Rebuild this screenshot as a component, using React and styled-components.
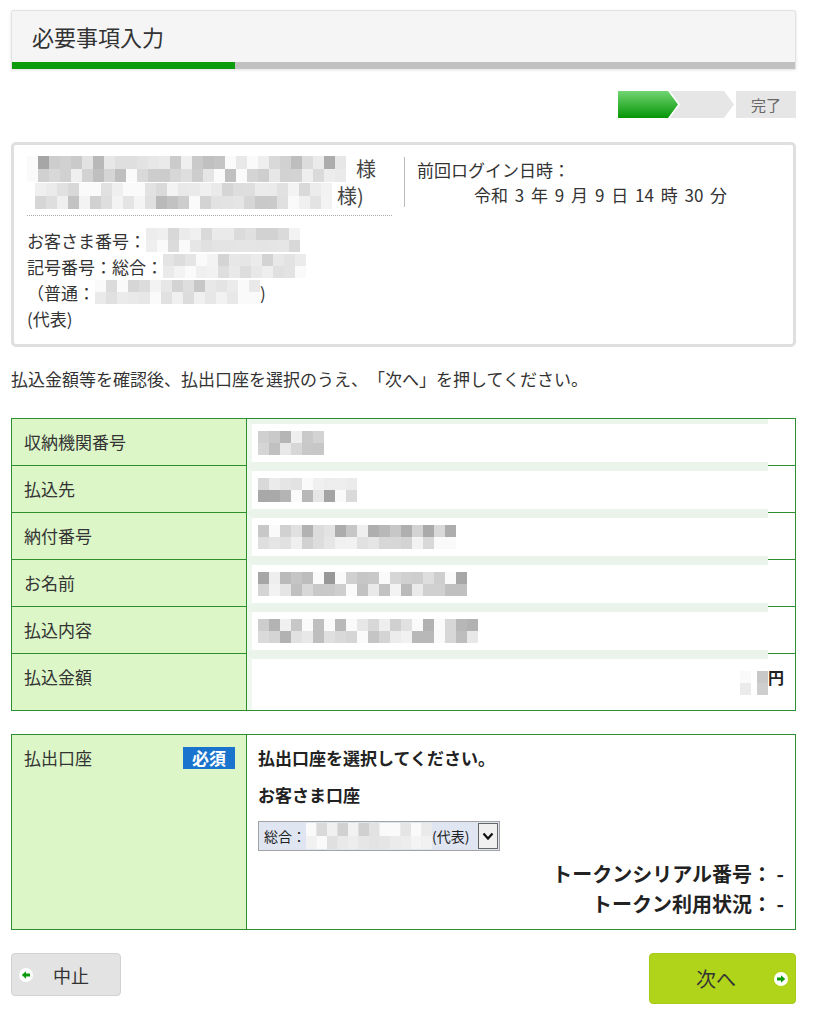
import React from 'react';
import styled, { createGlobalStyle } from 'styled-components';

const GREEN = '#2d8f2d';
const LABEL_BG = '#dcf6c8';
const BAND = '#ebf4eb';

const GlobalStyle = createGlobalStyle`
  html, body { margin: 0; padding: 0; background: #fff; }
  body {
    font-family: "Noto Sans CJK JP", "Noto Sans", sans-serif;
    color: #333;
    text-spacing-trim: space-all;
  }
  * { box-sizing: border-box; }
`;

function rng(seed) {
  let t = seed >>> 0;
  return () => {
    t += 0x6d2b79f5;
    let r = Math.imul(t ^ (t >>> 15), 1 | t);
    r ^= r + Math.imul(r ^ (r >>> 7), 61 | r);
    return ((r ^ (r >>> 14)) >>> 0) / 4294967296;
  };
}

const MosaicSvg = styled.svg`
  display: block;
  flex: none;
`;

function Mosaic({ cols, rows, seed, depth = 70, cw = 11, ch = 12 }) {
  const r = rng(seed);
  const cells = [];
  for (let y = 0; y < rows; y++) {
    const d = Array.isArray(depth) ? depth[y] : depth;
    for (let x = 0; x < cols; x++) {
      const v = r();
      const blank = r() < 0.1;
      const l = blank ? 250 : Math.round(244 - Math.pow(v, 1.1) * d);
      cells.push(
        <rect key={`${x}-${y}`} x={x * cw} y={y * ch} width={cw} height={ch} fill={`rgb(${l},${l},${l})`} />
      );
    }
  }
  return (
    <MosaicSvg width={cols * cw} height={rows * ch} viewBox={`0 0 ${cols * cw} ${rows * ch}`}>
      {cells}
    </MosaicSvg>
  );
}

const Page = styled.div`
  width: 796px;
  padding: 10px 0 20px 11px;
`;

/* ---------- header ---------- */
const Header = styled.header`
  background: #f5f5f5;
  border: 1px solid #e2e2e2;
  border-bottom: 0;
  border-radius: 3px 3px 0 0;
  box-shadow: 0 1px 3px rgba(0, 0, 0, 0.12);
`;
const HeaderTitle = styled.h1`
  margin: 0;
  font-weight: 400;
  font-size: 22px;
  line-height: 51px;
  padding-left: 20px;
  color: #333;
`;
const ProgressTrack = styled.div`
  height: 7px;
  background: #c1c1c1;
  display: flex;
`;
const ProgressFill = styled.div`
  width: ${(p) => p.$pct}%;
  background: #0b9b0b;
`;

/* ---------- steps ---------- */
const Steps = styled.div`
  margin-top: 22px;
  display: flex;
  justify-content: flex-end;
  height: 27px;
`;
const StepDone = styled.div`
  width: 60px;
  background: linear-gradient(#72d472, #069606);
  clip-path: polygon(0 0, calc(100% - 10px) 0, 100% 50%, calc(100% - 10px) 100%, 0 100%);
`;
const StepTodo = styled.div`
  width: 64px;
  margin-left: -8px;
  background: #e6e6e6;
  clip-path: polygon(0 0, calc(100% - 10px) 0, 100% 50%, calc(100% - 10px) 100%, 0 100%, 10px 50%);
`;
const StepEnd = styled.div`
  width: 60px;
  margin-left: 2px;
  background: #e6e6e6;
  color: #666;
  font-size: 15px;
  line-height: 27px;
  text-align: center;
`;

/* ---------- info box ---------- */
const InfoBox = styled.section`
  margin-top: 24px;
  border: 3px solid #dfdfdf;
  border-radius: 5px;
  padding: 10px 13px 13px;
  display: grid;
  grid-template-columns: 365px 1fr;
  column-gap: 12px;
  align-items: start;
`;
const NameBlock = styled.div`
  padding-bottom: 6px;
  border-bottom: 1px dotted #aaa;
`;
const NameLine = styled.div`
  display: flex;
  align-items: center;
  height: 27px;
  font-size: 20px;
  color: #444;
  gap: ${(p) => p.$gap}px;
  padding-left: ${(p) => p.$indent || 0}px;
`;
const Details = styled.div`
  margin-top: 11px;
`;
const DetailLine = styled.div`
  display: flex;
  align-items: center;
  height: 26px;
  font-size: 17px;
  color: #333;
  white-space: nowrap;
`;
const LoginInfo = styled.div`
  margin-top: 2px;
  border-left: 1px solid #bbb;
  padding-left: 12px;
  font-size: 17px;
  line-height: 25px;
  color: #333;
`;
const LoginDate = styled.div`
  padding-left: 57px;
  word-spacing: 3px;
`;

const Instruction = styled.p`
  margin: 20px 0 0;
  font-size: 17px;
  line-height: 24px;
  color: #333;
`;

/* ---------- data table ---------- */
const DataTable = styled.section`
  margin-top: 27px;
  border: 1px solid ${GREEN};
  display: flex;
  flex-direction: column;
`;
const Row = styled.div`
  display: grid;
  grid-template-columns: 235px 1fr;
  min-height: ${(p) => (p.$last ? 56 : 47)}px;
`;
const LabelCell = styled.div`
  background: ${LABEL_BG};
  border-right: 1px solid ${GREEN};
  border-bottom: ${(p) => (p.$last ? '0' : `1px solid ${GREEN}`)};
  padding: 11px 12px;
  font-size: 17px;
  line-height: 24px;
  color: #333;
`;
const ValueCell = styled.div`
  display: flex;
`;
const ValueMain = styled.div`
  flex: 1;
  display: flex;
  align-items: ${(p) => (p.$last ? 'flex-start' : 'center')};
  justify-content: ${(p) => (p.$last ? 'flex-end' : 'flex-start')};
  padding: ${(p) => (p.$last ? '6px 0 0 6px' : '0 0 0 6px')};
  border-left: 5px solid #eff8ef;
  border-top: 5px solid ${BAND};
  border-bottom: ${(p) => (p.$last ? '0' : `4px solid ${BAND}`)};
`;
const ValuePad = styled.div`
  width: 27px;
  border-bottom: ${(p) => (p.$last ? '0' : `1px solid ${GREEN}`)};
  padding-top: 12px;
  font-size: 16px;
  font-weight: 700;
  line-height: 22px;
  color: #222;
`;
const AmountDigits = styled.div`
  display: flex;
  gap: 6px;
  margin-top: 6px;
`;

/* ---------- account table ---------- */
const AccountTable = styled.section`
  margin-top: 23px;
  border: 1px solid ${GREEN};
  display: grid;
  grid-template-columns: 235px 1fr;
`;
const AccountLabel = styled.div`
  background: ${LABEL_BG};
  border-right: 1px solid ${GREEN};
  padding: 12px 11px 12px 12px;
  display: flex;
  justify-content: space-between;
  align-items: flex-start;
  font-size: 17px;
  line-height: 22px;
  color: #333;
`;
const Badge = styled.span`
  background: #1a73cc;
  color: #fff;
  font-weight: 700;
  font-size: 17px;
  line-height: 22px;
  padding: 0 9px;
`;
const AccountValue = styled.div`
  padding: 12px 11px 10px 11px;
`;
const Prompt = styled.div`
  font-size: 17px;
  font-weight: 700;
  line-height: 22px;
  color: #222;
  margin-top: ${(p) => p.$mt || 0}px;
`;
const SelectBox = styled.div`
  margin-top: 15px;
  width: 242px;
  height: 30px;
  border: 1px solid #a3a3a3;
  background: #dfe6f2;
  display: flex;
  align-items: center;
  padding-left: 5px;
  font-size: 14px;
  color: #222;
  white-space: nowrap;
`;
const SelectText = styled.span`
  line-height: 28px;
`;
const SelectArrow = styled.span`
  margin-left: auto;
  margin-right: 1px;
  width: 20px;
  height: 26px;
  border: 1px solid #666;
  background: #f0f0f0;
  display: flex;
  align-items: center;
  justify-content: center;
`;
const TokenList = styled.div`
  margin-top: 8px;
  text-align: right;
`;
const TokenLine = styled.div`
  font-size: 20px;
  font-weight: 700;
  line-height: 30px;
  color: #222;
`;

/* ---------- buttons ---------- */
const ButtonRow = styled.div`
  margin-top: 23px;
  display: flex;
  justify-content: space-between;
  align-items: flex-start;
`;
const CancelButton = styled.button`
  width: 110px;
  height: 43px;
  background: #e3e3e3;
  border: 1px solid #d2d2d2;
  border-radius: 4px;
  display: flex;
  align-items: center;
  padding: 0 0 0 7px;
  font-family: inherit;
  font-size: 18px;
  color: #333;
  cursor: pointer;
`;
const CancelText = styled.span`
  margin-left: 20px;
`;
const NextButton = styled.button`
  width: 147px;
  height: 51px;
  background: #b0d41a;
  border: 1px solid #a6ca18;
  border-radius: 4px;
  display: flex;
  align-items: center;
  justify-content: space-between;
  padding: 0 7px 0 46px;
  font-family: inherit;
  font-size: 20px;
  color: #333;
  cursor: pointer;
`;

const ArrowIcon = ({ dir }) => (
  <svg width="14" height="14" viewBox="0 0 14 14">
    <circle cx="7" cy="7" r="7" fill="#fff" />
    <path
      d={dir === 'left' ? 'M2.8 7 L7 3.2 V5.4 H11 V8.6 H7 V10.8 Z' : 'M11.2 7 L7 3.2 V5.4 H3 V8.6 H7 V10.8 Z'}
      fill="#0a9a0a"
    />
  </svg>
);

const Chevron = () => (
  <svg width="12" height="10" viewBox="0 0 12 10">
    <path d="M1.5 2.5 L6 7.5 L10.5 2.5" fill="none" stroke="#111" strokeWidth="2.2" />
  </svg>
);

const rows = [
  { label: '収納機関番号', cols: 6, seed: 11, depth: [75, 80] },
  { label: '払込先', cols: 9, seed: 22, depth: [45, 100] },
  { label: '納付番号', cols: 18, seed: 33, depth: [85, 40] },
  { label: 'お名前', cols: 19, seed: 44, depth: [95, 60] },
  { label: '払込内容', cols: 20, seed: 55, depth: [95, 75] },
];

export default function App() {
  return (
    <>
      <GlobalStyle />
      <Page>
        <Header>
          <HeaderTitle>必要事項入力</HeaderTitle>
          <ProgressTrack>
            <ProgressFill $pct={28.5} />
          </ProgressTrack>
        </Header>

        <Steps>
          <StepDone />
          <StepTodo />
          <StepEnd>完了</StepEnd>
        </Steps>

        <InfoBox>
          <div>
            <NameBlock>
              <NameLine $gap={10}>
                <Mosaic cols={29} rows={2} ch={13} seed={7} depth={[80, 55]} />
                <span>様</span>
              </NameLine>
              <NameLine $gap={5} $indent={8}>
                <Mosaic cols={27} rows={2} ch={13} seed={8} depth={[35, 60]} />
                <span>様)</span>
              </NameLine>
            </NameBlock>
            <Details>
              <DetailLine>
                お客さま番号：
                <Mosaic cols={14} rows={2} seed={9} depth={[40, 30]} />
              </DetailLine>
              <DetailLine>
                記号番号：総合：
                <Mosaic cols={13} rows={2} seed={10} depth={[35, 30]} />
              </DetailLine>
              <DetailLine>
                （普通：
                <Mosaic cols={15} rows={2} seed={12} depth={[45, 35]} />)
              </DetailLine>
              <DetailLine>(代表)</DetailLine>
            </Details>
          </div>
          <LoginInfo>
            <div>前回ログイン日時：</div>
            <LoginDate>令和 3 年 9 月 9 日 14 時 30 分</LoginDate>
          </LoginInfo>
        </InfoBox>

        <Instruction>払込金額等を確認後、払出口座を選択のうえ、「次へ」を押してください。</Instruction>

        <DataTable>
          {rows.map((r) => (
            <Row key={r.label}>
              <LabelCell>{r.label}</LabelCell>
              <ValueCell>
                <ValueMain>
                  <Mosaic cols={r.cols} rows={2} seed={r.seed} depth={r.depth} />
                </ValueMain>
                <ValuePad />
              </ValueCell>
            </Row>
          ))}
          <Row $last>
            <LabelCell $last>払込金額</LabelCell>
            <ValueCell>
              <ValueMain $last>
                <AmountDigits>
                  <Mosaic cols={1} rows={2} seed={66} depth={[30, 45]} />
                  <Mosaic cols={1} rows={2} seed={67} depth={[45, 70]} />
                </AmountDigits>
              </ValueMain>
              <ValuePad $last>円</ValuePad>
            </ValueCell>
          </Row>
        </DataTable>

        <AccountTable>
          <AccountLabel>
            <span>払出口座</span>
            <Badge>必須</Badge>
          </AccountLabel>
          <AccountValue>
            <Prompt>払出口座を選択してください。</Prompt>
            <Prompt $mt={15}>お客さま口座</Prompt>
            <SelectBox role="combobox" aria-label="お客さま口座">
              <SelectText>総合：</SelectText>
              <Mosaic cols={12} rows={2} cw={10.5} ch={13} seed={77} depth={[40, 25]} />
              <SelectText>(代表)</SelectText>
              <SelectArrow>
                <Chevron />
              </SelectArrow>
            </SelectBox>
            <TokenList>
              <TokenLine>トークンシリアル番号： -</TokenLine>
              <TokenLine>トークン利用状況： -</TokenLine>
            </TokenList>
          </AccountValue>
        </AccountTable>

        <ButtonRow>
          <CancelButton type="button">
            <ArrowIcon dir="left" />
            <CancelText>中止</CancelText>
          </CancelButton>
          <NextButton type="button">
            <span>次へ</span>
            <ArrowIcon dir="right" />
          </NextButton>
        </ButtonRow>
      </Page>
    </>
  );
}
